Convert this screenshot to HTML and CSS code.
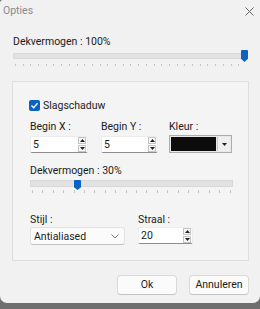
FILE: index.html
```html
<!DOCTYPE html>
<html>
<head>
<meta charset="utf-8">
<link rel="stylesheet" href="styles.css">
</head>
<body>
<div class="window">
  <div class="titlebar">
    <span class="title">Opties</span>
    <svg class="close" width="9" height="9" viewBox="0 0 9 9"><path d="M0.5 0.5 L8.5 8.5 M8.5 0.5 L0.5 8.5" stroke="#666" stroke-width="1" fill="none"/></svg>
  </div>
  <div class="content">
    <div class="label top-label">Dekvermogen : 100%</div>
    <div class="slider slider-top">
      <div class="track"></div>
      <div class="ticks"></div>
      <div class="thumb" style="left: calc(100% - 6px)"></div>
    </div>

    <div class="group">
      <label class="check-row">
        <span class="checkbox">
          <svg width="9" height="9" viewBox="0 0 9 9"><path d="M1.5 4.6 L3.6 6.7 L7.6 2.2" stroke="#fff" stroke-width="1.4" fill="none"/></svg>
        </span>
        <span>Slagschaduw</span>
      </label>

      <div class="fields">
        <div class="field f-x">
          <div class="label">Begin X :</div>
          <div class="spin">
            <span class="val">5</span>
            <span class="spin-btns">
              <span class="sb"><svg width="5" height="3" viewBox="0 0 5 3"><path d="M0 3 L2.5 0 L5 3Z" fill="#222"/></svg></span>
              <span class="sb"><svg width="5" height="3" viewBox="0 0 5 3"><path d="M0 0 L2.5 3 L5 0Z" fill="#222"/></svg></span>
            </span>
          </div>
        </div>
        <div class="field f-y">
          <div class="label">Begin Y :</div>
          <div class="spin">
            <span class="val">5</span>
            <span class="spin-btns">
              <span class="sb"><svg width="5" height="3" viewBox="0 0 5 3"><path d="M0 3 L2.5 0 L5 3Z" fill="#222"/></svg></span>
              <span class="sb"><svg width="5" height="3" viewBox="0 0 5 3"><path d="M0 0 L2.5 3 L5 0Z" fill="#222"/></svg></span>
            </span>
          </div>
        </div>
        <div class="field f-color">
          <div class="label">Kleur :</div>
          <div class="colorbox">
            <span class="swatch"></span>
            <span class="cdrop"><svg width="5" height="3" viewBox="0 0 5 3"><path d="M0 0 L2.5 3 L5 0Z" fill="#222"/></svg></span>
          </div>
        </div>
      </div>

      <div class="label mid-label">Dekvermogen : 30%</div>
      <div class="slider slider-mid">
        <div class="track"></div>
        <div class="ticks"></div>
        <div class="thumb" style="left: 44px"></div>
      </div>

      <div class="fields bottom-fields">
        <div class="field f-style">
          <div class="label">Stijl :</div>
          <div class="combo">
            <span>Antialiased</span>
            <svg width="8" height="5" viewBox="0 0 8 5"><path d="M0.5 0.5 L4 4 L7.5 0.5" stroke="#777" stroke-width="1" fill="none"/></svg>
          </div>
        </div>
        <div class="field f-radius">
          <div class="label">Straal :</div>
          <div class="spin">
            <span class="val">20</span>
            <span class="spin-btns">
              <span class="sb"><svg width="5" height="3" viewBox="0 0 5 3"><path d="M0 3 L2.5 0 L5 3Z" fill="#222"/></svg></span>
              <span class="sb"><svg width="5" height="3" viewBox="0 0 5 3"><path d="M0 0 L2.5 3 L5 0Z" fill="#222"/></svg></span>
            </span>
          </div>
        </div>
      </div>
    </div>

    <div class="buttons">
      <button class="btn">Ok</button>
      <button class="btn">Annuleren</button>
    </div>
  </div>
</div>
</body>
</html>
```

FILE: styles.css
```css
* { box-sizing: border-box; }
html, body { margin: 0; padding: 0; }
body {
  width: 260px;
  height: 309px;
  overflow: hidden;
  background: #6f6f6f;
  font-family: Roboto, "Noto Sans", sans-serif;
  font-size: 10.5px;
  color: #1b1b1b;
}
.window {
  height: 303px;
  background: #f1f1f1;
  border-radius: 3px 0 7px 7px;
  display: flex;
  flex-direction: column;
}
.titlebar {
  height: 22px;
  display: flex;
  align-items: center;
  justify-content: space-between;
  padding: 0 6px 0 3px;
}
.title { color: #8a8a8a; line-height: 16px; }
.close { display: block; }
.content {
  padding: 0 11px 0 12px;
  display: flex;
  flex-direction: column;
}
.label { line-height: 16px; height: 16px; white-space: nowrap; }
.top-label { margin-top: 12px; margin-left: 1px; }

.slider { position: relative; }
.slider .track {
  position: absolute;
  left: 0; right: 0;
  background: #e2e2e2;
  border: 1px solid #d8d8d8;
}
.slider .ticks {
  position: absolute;
  left: 2px; right: 2px;
  height: 2px;
  background: repeating-linear-gradient(to right, #c6c6c6 0 1px, transparent 1px 7.7px);
}
.slider .thumb {
  position: absolute;
  width: 7px;
  background: #0a63c2;
  border-radius: 1px 1px 0 0;
  clip-path: polygon(0 0, 100% 0, 100% 72%, 50% 100%, 0 72%);
}
.slider-top {
  height: 17px;
  margin-left: 1px;
  margin-right: 2px;
}
.slider-top .track { top: 3px; height: 6px; }
.slider-top .ticks { top: 14px; }
.slider-top .thumb { top: 0; height: 12px; }

.group {
  margin-top: 14px;
  border: 1px solid #dedede;
  background: #f4f4f4;
  height: 180px;
  padding: 15px 0 0 17px;
  display: flex;
  flex-direction: column;
}
.check-row {
  display: flex;
  align-items: center;
  height: 16px;
  margin-left: -1px;
}
.checkbox {
  width: 11px;
  height: 11px;
  border-radius: 2px;
  background: #0a63c2;
  display: flex;
  align-items: center;
  justify-content: center;
  margin-right: 3px;
}
.checkbox svg { display: block; }

.fields { display: flex; margin-top: 6px; }
.field { display: flex; flex-direction: column; }
.f-x { width: 58px; margin-right: 13px; }
.f-y { width: 57px; margin-right: 11px; }
.f-color { width: 63px; }

.spin {
  margin-top: 1px;
  height: 17px;
  background: #ffffff;
  border: 1px solid #ececec;
  border-bottom: 1px solid #8c8c8c;
  border-radius: 2px;
  display: flex;
  align-items: center;
  justify-content: space-between;
  padding: 0 1px 0 2px;
}
.spin .val { line-height: 15px; }
.spin-btns { display: flex; flex-direction: column; gap: 1px; }
.sb {
  width: 8px;
  height: 7px;
  border: 1px solid #c4c4c4;
  background: #f7f7f7;
  display: flex;
  align-items: center;
  justify-content: center;
}
.sb svg { display: block; }

.colorbox {
  height: 18px;
  border: 1px solid #adadad;
  background: #e9e9e9;
  display: flex;
  padding: 1px;
  gap: 1px;
}
.swatch { flex: 1; background: #0c0c0c; }
.cdrop {
  width: 13px;
  background: #efefef;
  border-left: 1px solid #c8c8c8;
  display: flex;
  align-items: center;
  justify-content: center;
}

.mid-label { margin-top: 10px; }
.slider-mid { height: 15px; width: 203px; }
.slider-mid .track { top: 1px; height: 7px; }
.slider-mid .ticks {
  top: 11px; height: 3px;
  background: repeating-linear-gradient(to right, #c6c6c6 0 1px, transparent 1px 10.4px);
}
.slider-mid .thumb { top: 1px; height: 10px; }

.bottom-fields { margin-top: 18px; }
.f-style { width: 95px; margin-right: 13px; }
.f-radius { width: 55px; }
.f-style .label, .f-radius .label { height: 15px; }
.combo {
  height: 18px;
  background: #fbfbfb;
  border: 1px solid #e2e2e2;
  border-bottom-color: #c2c2c2;
  border-radius: 3px;
  display: flex;
  align-items: center;
  justify-content: space-between;
  padding: 0 5px 0 3px;
}
.f-radius .spin { margin-top: 0; }

.buttons {
  display: flex;
  justify-content: flex-end;
  gap: 12px;
  margin-top: 14px;
}
.btn {
  width: 60px;
  height: 20px;
  font-family: inherit;
  font-size: 10.5px;
  color: #1b1b1b;
  background: #fbfbfb;
  border: 1px solid #d9d9d9;
  border-bottom-color: #c4c4c4;
  border-radius: 4px;
  padding: 0;
  line-height: 16px;
}
```
